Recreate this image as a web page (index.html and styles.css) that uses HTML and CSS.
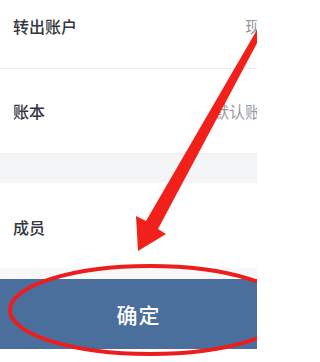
FILE: index.html
```html
<!DOCTYPE html>
<html lang="zh">
<head>
<meta charset="utf-8">
<link rel="stylesheet" href="styles.css">
</head>
<body>
<div class="page">
  <div class="row row-first">
    <span class="label">转出账户</span>
    <span class="value">现金</span>
  </div>
  <div class="row row-book">
    <span class="label">账本</span>
    <span class="value">默认账本</span>
  </div>
  <div class="gap"></div>
  <div class="row row-member">
    <span class="label">成员</span>
  </div>
  <div class="footer-gap"></div>
  <div class="confirm"><span>确定</span></div>
  <div class="bottom"></div>
  <svg class="annot" width="257" height="362" viewBox="0 0 257 362">
    <ellipse cx="150" cy="310" rx="140" ry="44" fill="none" stroke="#ec1d1d" stroke-width="4"/>
    <polygon fill="#f2201a" points="258,28 263,32 158,229 166,234 138,251 136,216 146,221"/>
  </svg>
</div>
</body>
</html>
```
FILE: styles.css
```css
html, body {
  margin: 0;
  padding: 0;
  background: #ffffff;
}
body {
  width: 257px;
  height: 362px;
  overflow: hidden;
  font-family: "Noto Sans CJK SC", "Noto Sans", sans-serif;
}
.page {
  position: relative;
  width: 257px;
  height: 362px;
  overflow: hidden;
  display: flex;
  flex-direction: column;
}
.row {
  display: flex;
  align-items: center;
  justify-content: space-between;
  padding-left: 13px;
  background: #ffffff;
  flex: none;
}
.label {
  font-size: 16px;
  line-height: 1;
  font-weight: 500;
  color: #33363b;
}
.value {
  font-size: 16px;
  line-height: 1;
  color: #9499a3;
  margin-right: -20px;
  white-space: nowrap;
}
.row-first {
  height: 52px;
  padding-bottom: 16px;
  border-bottom: 1px solid #ebebec;
}
.row-book {
  height: 84px;
}
.gap {
  height: 30px;
  flex: none;
  background: #f4f5f7;
  border-top: 1px solid #eeeff1;
  box-sizing: border-box;
}
.row-member {
  height: 85px;
  padding-top: 2px;
  box-sizing: border-box;
}
.footer-gap {
  height: 11px;
  flex: none;
  background: #f8f8f9;
}
.confirm {
  height: 70px;
  flex: none;
  background: #4a6f9d;
  display: flex;
  align-items: center;
  justify-content: center;
  padding-left: 20px;
}
.confirm span {
  font-size: 21px;
  line-height: 1;
  font-weight: 500;
  color: #ffffff;
  letter-spacing: 1px;
}
.bottom {
  flex: 1;
  background: #ffffff;
}
.annot {
  position: absolute;
  left: 0;
  top: 0;
  pointer-events: none;
}
```
